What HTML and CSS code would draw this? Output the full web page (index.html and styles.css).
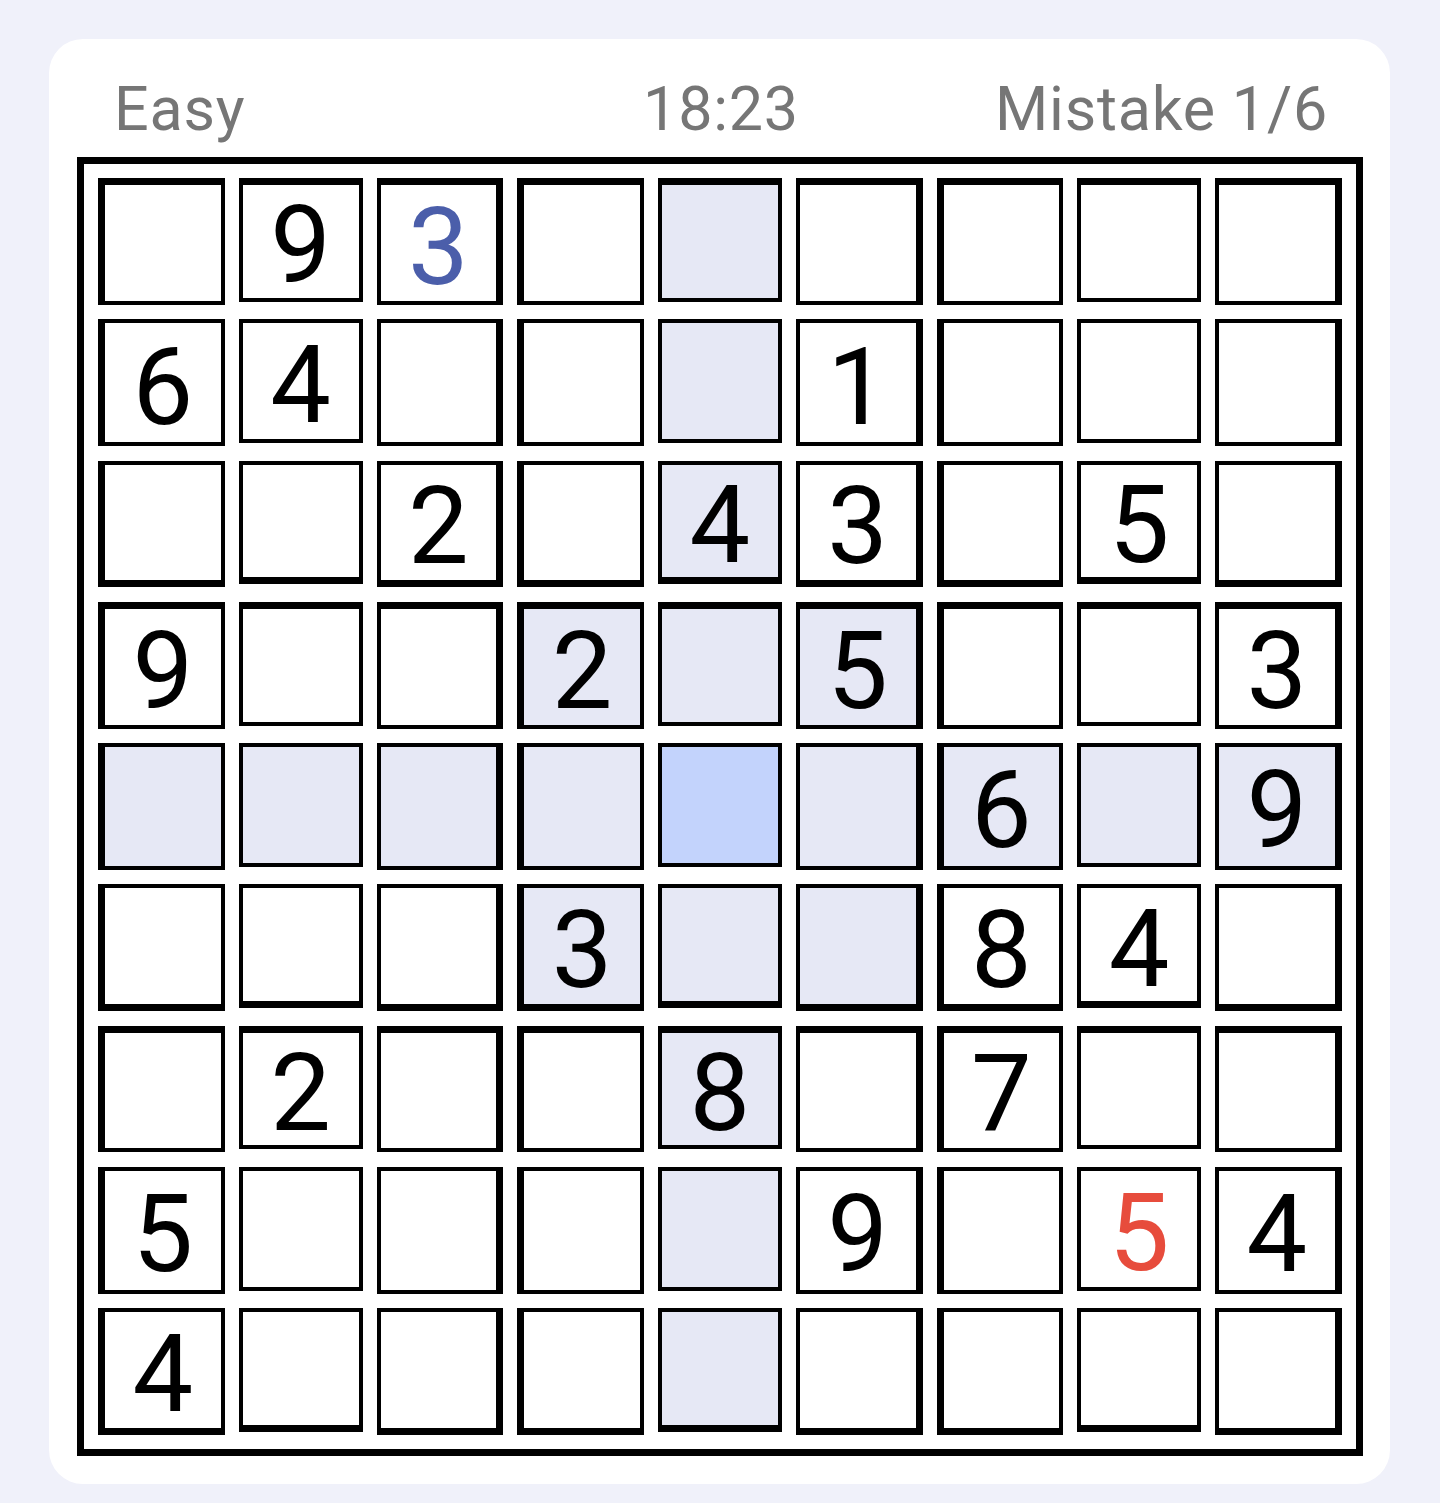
FILE: index.html
```html
<!DOCTYPE html>
<html lang="en">
<head>
<meta charset="utf-8">
<title>Sudoku</title>
<link rel="stylesheet" href="styles.css">
</head>
<body>
<div class="page">
  <div class="card">
    <div class="header">
      <span class="level">Easy</span>
      <span class="timer">18:23</span>
      <span class="mistakes">Mistake 1/6</span>
    </div>
    <div class="board">
      <div class="row top">
        <div class="cell"></div><div class="cell">9</div><div class="cell user">3</div><div class="cell"></div><div class="cell hl"></div><div class="cell"></div><div class="cell"></div><div class="cell"></div><div class="cell"></div>
      </div>
      <div class="row">
        <div class="cell">6</div><div class="cell">4</div><div class="cell"></div><div class="cell"></div><div class="cell hl"></div><div class="cell">1</div><div class="cell"></div><div class="cell"></div><div class="cell"></div>
      </div>
      <div class="row bot">
        <div class="cell"></div><div class="cell"></div><div class="cell">2</div><div class="cell"></div><div class="cell hl">4</div><div class="cell">3</div><div class="cell"></div><div class="cell">5</div><div class="cell"></div>
      </div>
      <div class="row top">
        <div class="cell">9</div><div class="cell"></div><div class="cell"></div><div class="cell hl">2</div><div class="cell hl"></div><div class="cell hl">5</div><div class="cell"></div><div class="cell"></div><div class="cell">3</div>
      </div>
      <div class="row">
        <div class="cell hl"></div><div class="cell hl"></div><div class="cell hl"></div><div class="cell hl"></div><div class="cell sel"></div><div class="cell hl"></div><div class="cell hl">6</div><div class="cell hl"></div><div class="cell hl">9</div>
      </div>
      <div class="row bot">
        <div class="cell"></div><div class="cell"></div><div class="cell"></div><div class="cell hl">3</div><div class="cell hl"></div><div class="cell hl"></div><div class="cell">8</div><div class="cell">4</div><div class="cell"></div>
      </div>
      <div class="row top">
        <div class="cell"></div><div class="cell">2</div><div class="cell"></div><div class="cell"></div><div class="cell hl">8</div><div class="cell"></div><div class="cell">7</div><div class="cell"></div><div class="cell"></div>
      </div>
      <div class="row">
        <div class="cell">5</div><div class="cell"></div><div class="cell"></div><div class="cell"></div><div class="cell hl"></div><div class="cell">9</div><div class="cell"></div><div class="cell err">5</div><div class="cell">4</div>
      </div>
      <div class="row bot">
        <div class="cell">4</div><div class="cell"></div><div class="cell"></div><div class="cell"></div><div class="cell hl"></div><div class="cell"></div><div class="cell"></div><div class="cell"></div><div class="cell"></div>
      </div>
    </div>
  </div>
</div>
</body>
</html>
```
FILE: styles.css
```css
html, body {
  margin: 0;
  padding: 0;
  background: #f0f1fa;
}

body {
  font-family: Roboto, "Liberation Sans", sans-serif;
}

.page {
  padding: 39px 50px 20px 49px;
}

.card {
  background: #ffffff;
  border-radius: 34px;
  padding: 34px 27px 28px 28px;
}

.header {
  display: grid;
  grid-template-columns: 1fr auto 1fr;
  align-items: center;
  padding: 0 35px 0 37px;
  height: 72px;
  margin-bottom: 12px;
  font-size: 61px;
  line-height: 72px;
  letter-spacing: 0.8px;
  color: #767676;
}

.level { justify-self: start; }
.timer { justify-self: center; }
.mistakes { justify-self: end; }

.board {
  border: 7px solid #000;
  padding: 14px;
  display: flex;
  flex-direction: column;
  gap: 14.5px;
}

.row {
  display: flex;
  gap: 14px;
  align-items: flex-start;
}

.cell {
  box-sizing: border-box;
  width: 126.75px;
  height: 126.75px;
  flex: none;
  border: 4px solid #000;
  background: #fff;
  display: flex;
  align-items: center;
  justify-content: center;
  font-size: 108px;
  line-height: 1;
  padding-top: 8px;
  color: #000;
}

.cell:nth-child(3n+2) {
  width: 123.75px;
  height: 123.75px;
}

.cell:nth-child(3n+1) { border-left-width: 7px; }
.cell:nth-child(3n) { border-right-width: 7px; }
.row.top .cell { border-top-width: 7px; }
.row.bot .cell { border-bottom-width: 7px; }

.cell.hl { background: #e6e8f5; }
.cell.sel { background: #c3d3fc; }
.cell.user { color: #4b5eaa; }
.cell.err { color: #e74c3c; }
```
